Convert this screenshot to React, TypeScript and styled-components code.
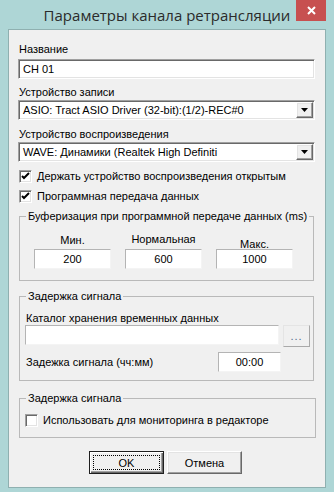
import React from 'react';
import styled, { createGlobalStyle, css } from 'styled-components';

const GlobalStyle = createGlobalStyle`
  html, body {
    margin: 0;
    padding: 0;
    background: #aed6d6;
  }
  body {
    font-family: "Liberation Sans", Arial, sans-serif;
    font-size: 11px;
    color: #000;
  }
`;

const sunken = css`
  border: 1px solid;
  border-color: #a0a0a0 #ffffff #ffffff #a0a0a0;
  box-shadow: inset 1px 1px 0 #696969, inset -1px -1px 0 #e3e3e3;
`;

const raised = css`
  border: 1px solid;
  border-color: #ffffff #696969 #696969 #ffffff;
  box-shadow: inset -1px -1px 0 #a0a0a0, inset 1px 1px 0 #e3e3e3;
`;

const flat = css`
  border: 1px solid;
  border-color: #b4b4b4 #f4f4f4 #f4f4f4 #b4b4b4;
  background: #fff;
`;

const Frame = styled.div`
  width: 334px;
  height: 492px;
  box-sizing: border-box;
  background: #aed6d6;
  padding: 0 8px 4px;
  display: flex;
  flex-direction: column;
  overflow: hidden;
`;

const TitleBar = styled.div`
  height: 29px;
  flex: none;
  display: grid;
  grid-template-columns: 30px 1fr 30px;
  align-items: start;
`;

const Title = styled.div`
  grid-column: 2;
  text-align: center;
  font-family: "Open Sans", "Noto Sans", sans-serif;
  font-size: 15px;
  line-height: 20px;
  padding-top: 5px;
  color: #2b2b2b;
  white-space: nowrap;
`;

const CloseButton = styled.div`
  grid-column: 3;
  height: 21px;
  background: #c75050;
  display: flex;
  align-items: center;
  justify-content: center;
`;

const Client = styled.div`
  flex: 1;
  background: #f0f0f0;
  border: 1px solid #8fb0b0;
  padding: 0 10px 0 9px;
  display: flex;
  flex-direction: column;
`;

const Label = styled.div<{ $top?: number }>`
  line-height: 14px;
  height: 14px;
  margin-top: ${(p) => p.$top ?? 0}px;
  padding-left: 1px;
  white-space: nowrap;
`;

const TextBox = styled.div<{ $gap?: number }>`
  ${sunken};
  box-sizing: border-box;
  height: 20px;
  margin-top: ${(p) => p.$gap ?? 2}px;
  background: #fff;
  padding-left: 4px;
  line-height: 18px;
  white-space: nowrap;
  overflow: hidden;
`;

const Combo = styled.div<{ $gap?: number }>`
  ${sunken};
  box-sizing: border-box;
  height: 20px;
  margin-top: ${(p) => p.$gap ?? 1}px;
  background: #fff;
  display: flex;
  align-items: stretch;
  padding: 1px;
`;

const ComboText = styled.div`
  flex: 1;
  padding-left: 3px;
  line-height: 16px;
  white-space: nowrap;
  overflow: hidden;
`;

const DropButton = styled.div`
  ${raised};
  box-sizing: border-box;
  width: 17px;
  background: #f0f0f0;
  display: flex;
  align-items: center;
  justify-content: center;
`;

const CheckRow = styled.div<{ $top?: number; $indent?: number }>`
  display: flex;
  align-items: center;
  height: 20px;
  gap: 5px;
  margin-top: ${(p) => p.$top ?? 0}px;
  padding-left: ${(p) => p.$indent ?? 1}px;
  white-space: nowrap;
`;

const CheckBox = styled.div`
  ${sunken};
  box-sizing: border-box;
  width: 13px;
  height: 13px;
  background: #fff;
  display: flex;
  align-items: center;
  justify-content: center;
`;

const Group = styled.fieldset<{ $top: number; $width: number }>`
  margin: ${(p) => p.$top}px 0 0 1px;
  width: ${(p) => p.$width}px;
  box-sizing: border-box;
  border: 1px solid #b9b9b9;
  padding: 0;
  min-width: 0;
`;

const Legend = styled.legend`
  margin-left: 6px;
  padding: 0 2px;
  line-height: 14px;
  white-space: nowrap;
`;

const BufferGrid = styled.div`
  display: grid;
  grid-template-columns: 77px 77px 77px;
  column-gap: 14px;
  padding: 9px 0 11px 14px;
`;

const BufferColumn = styled.div`
  display: flex;
  flex-direction: column;
  align-items: stretch;
`;

const BufferLabel = styled.div<{ $shift: number }>`
  text-align: center;
  line-height: 14px;
  margin-top: ${(p) => p.$shift}px;
  margin-bottom: ${(p) => 3 - p.$shift}px;
`;

const FlatBox = styled.div<{ $width?: number }>`
  ${flat};
  box-sizing: border-box;
  height: 20px;
  width: ${(p) => (p.$width ? `${p.$width}px` : 'auto')};
  line-height: 18px;
  text-align: center;
  flex: ${(p) => (p.$width ? 'none' : '1')};
`;

const DelayBody = styled.div`
  padding: 8px 0 8px 5px;
  display: flex;
  flex-direction: column;
`;

const PathRow = styled.div`
  display: flex;
  align-items: flex-start;
  gap: 4px;
  padding-right: 3px;
`;

const BrowseButton = styled.div`
  border: 1px solid;
  border-color: #e4e4e4 #a9a9a9 #a9a9a9 #e4e4e4;
  box-sizing: border-box;
  width: 27px;
  height: 22px;
  background: #f0f0f0;
  text-align: center;
  line-height: 20px;
  color: #4a6a8a;
  letter-spacing: 1px;
`;

const DelayRow = styled.div`
  display: flex;
  align-items: center;
  justify-content: space-between;
  margin-top: 5px;
  padding-right: 32px;
`;

const MonitorBody = styled.div`
  padding: 5px 0 7px 5px;
`;

const ButtonRow = styled.div`
  display: flex;
  justify-content: center;
  gap: 3px;
  margin-top: 13px;
  padding-right: 2px;
`;

const DialogButton = styled.div<{ $default?: boolean }>`
  ${raised};
  box-sizing: border-box;
  width: 75px;
  height: 23px;
  background: #f0f0f0;
  display: flex;
  align-items: center;
  justify-content: center;
  ${(p) =>
    p.$default &&
    css`
      border-color: #1e1e1e;
      box-shadow: inset 1px 1px 0 #fff, inset -1px -1px 0 #696969,
        inset -2px -2px 0 #a0a0a0;
      padding: 3px;
    `}
`;

const FocusRing = styled.div`
  flex: 1;
  align-self: stretch;
  border: 1px dotted #000;
  display: flex;
  align-items: center;
  justify-content: center;
`;

const Arrow = () => (
  <svg width="7" height="4" viewBox="0 0 7 4">
    <path d="M0 0h7L3.5 4z" fill="#000" />
  </svg>
);

const Check = () => (
  <svg width="9" height="9" viewBox="0 0 9 9">
    <path d="M1 4l2 2 5-5" fill="none" stroke="#000" strokeWidth="2" />
  </svg>
);

const Cross = () => (
  <svg width="9" height="9" viewBox="0 0 9 9">
    <path d="M1 1l7 7M8 1l-7 7" stroke="#fff" strokeWidth="2" />
  </svg>
);

const buffers = [
  { label: 'Мин.', value: '200', shift: 1 },
  { label: 'Нормальная', value: '600', shift: 0 },
  { label: 'Макс.', value: '1000', shift: 5 },
];

export default function App() {
  return (
    <Frame>
      <GlobalStyle />
      <TitleBar>
        <Title>Параметры канала ретрансляции</Title>
        <CloseButton>
          <Cross />
        </CloseButton>
      </TitleBar>
      <Client>
        <Label $top={12}>Название</Label>
        <TextBox $gap={3}>CH 01</TextBox>

        <Label $top={6}>Устройство записи</Label>
        <Combo>
          <ComboText>ASIO: Tract ASIO Driver (32-bit):(1/2)-REC#0</ComboText>
          <DropButton>
            <Arrow />
          </DropButton>
        </Combo>

        <Label $top={7}>Устройство воспроизведения</Label>
        <Combo>
          <ComboText>WAVE: Динамики (Realtek High Definiti</ComboText>
          <DropButton>
            <Arrow />
          </DropButton>
        </Combo>

        <CheckRow $top={4}>
          <CheckBox>
            <Check />
          </CheckBox>
          Держать устройство воспроизведения открытым
        </CheckRow>
        <CheckRow>
          <CheckBox>
            <Check />
          </CheckBox>
          Программная передача данных
        </CheckRow>

        <Group $top={3} $width={295}>
          <Legend>Буферизация при программной передаче данных (ms)</Legend>
          <BufferGrid>
            {buffers.map((b) => (
              <BufferColumn key={b.label}>
                <BufferLabel $shift={b.shift}>{b.label}</BufferLabel>
                <FlatBox>{b.value}</FlatBox>
              </BufferColumn>
            ))}
          </BufferGrid>
        </Group>

        <Group $top={8} $width={295}>
          <Legend>Задержка сигнала</Legend>
          <DelayBody>
            <Label>Каталог хранения временных данных</Label>
            <PathRow>
              <FlatBox />
              <BrowseButton>...</BrowseButton>
            </PathRow>
            <DelayRow>
              <Label>Задежка сигнала (чч:мм)</Label>
              <FlatBox $width={63}>00:00</FlatBox>
            </DelayRow>
          </DelayBody>
        </Group>

        <Group $top={10} $width={297}>
          <Legend>Задержка сигнала</Legend>
          <MonitorBody>
            <CheckRow $indent={0}>
              <CheckBox />
              Использовать для мониторинга в редакторе
            </CheckRow>
          </MonitorBody>
        </Group>

        <ButtonRow>
          <DialogButton $default>
            <FocusRing>OK</FocusRing>
          </DialogButton>
          <DialogButton>Отмена</DialogButton>
        </ButtonRow>
      </Client>
    </Frame>
  );
}
